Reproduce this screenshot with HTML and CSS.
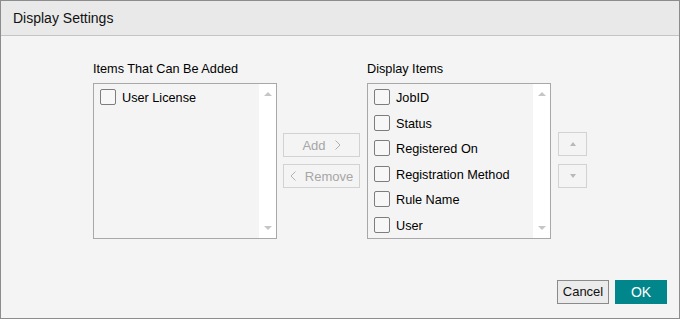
FILE: index.html
```html
<!DOCTYPE html>
<html>
<head>
<meta charset="utf-8">
<link rel="stylesheet" href="styles.css">
</head>
<body>
<div class="dialog">
  <div class="dlg-header">Display Settings</div>
  <div class="dlg-body">
    <div class="transfer">
      <div class="lbl">Items That Can Be Added</div>
      <div></div>
      <div class="lbl">Display Items</div>
      <div></div>

      <div class="listbox">
        <div class="items">
          <div class="item"><span class="cb"></span><span>User License</span></div>
        </div>
        <div class="sbar"><span class="tri up"></span><span class="tri down"></span></div>
      </div>

      <div class="move-btns">
        <div class="btn-dis">Add <svg class="chev" width="6" height="10" viewBox="0 0 6 10"><path d="M0.5 0.5 L5 5 L0.5 9.5" fill="none" stroke="#b0b0b0" stroke-width="1"/></svg></div>
        <div class="btn-dis"><svg class="chev" width="6" height="10" viewBox="0 0 6 10"><path d="M5.5 0.5 L1 5 L5.5 9.5" fill="none" stroke="#b0b0b0" stroke-width="1"/></svg> Remove</div>
      </div>

      <div class="listbox">
        <div class="items">
          <div class="item"><span class="cb"></span><span>JobID</span></div>
          <div class="item"><span class="cb"></span><span>Status</span></div>
          <div class="item"><span class="cb"></span><span>Registered On</span></div>
          <div class="item"><span class="cb"></span><span>Registration Method</span></div>
          <div class="item"><span class="cb"></span><span>Rule Name</span></div>
          <div class="item"><span class="cb"></span><span>User</span></div>
        </div>
        <div class="sbar"><span class="tri up"></span><span class="tri down"></span></div>
      </div>

      <div class="order-btns">
        <div class="btn-sq"><span class="tri up"></span></div>
        <div class="btn-sq"><span class="tri down"></span></div>
      </div>
    </div>
  </div>
  <div class="dlg-footer">
    <div class="btn-cancel">Cancel</div>
    <div class="btn-ok">OK</div>
  </div>
</div>
</body>
</html>
```
FILE: styles.css
```css
html, body {
  margin: 0;
  padding: 0;
  background: #f4f4f4;
}
.dialog {
  width: 680px;
  height: 319px;
  box-sizing: border-box;
  border: 1px solid #8c8c8c;
  background: #f4f4f4;
  display: flex;
  flex-direction: column;
  font-family: "Liberation Sans", Arial, sans-serif;
  color: #000;
}
.dlg-header {
  height: 35px;
  box-sizing: border-box;
  border-bottom: 1px solid #c4c4c4;
  background: #e9e9e9;
  font-size: 14px;
  line-height: 16px;
  padding: 9px 0 0 12px;
  color: #111;
}
.dlg-body {
  flex: 1;
  padding: 26px 0 0 92px;
}
.transfer {
  display: grid;
  grid-template-columns: 184px 78px 184px 30px;
  grid-template-rows: auto 156px;
  column-gap: 6px;
}
.lbl {
  font-size: 12.7px;
  line-height: 14px;
  margin-bottom: 7px;
}
.listbox {
  border: 1px solid #a8a8a8;
  box-sizing: border-box;
  height: 156px;
  display: flex;
  background: #f4f4f4;
}
.items {
  flex: 1;
  padding: 5px 0 0 6px;
}
.item {
  height: 25.6px;
  display: flex;
  align-items: flex-start;
  font-size: 12.7px;
  line-height: 18px;
}
.cb {
  width: 16px;
  height: 16px;
  box-sizing: border-box;
  border: 1px solid #7d7d7d;
  border-radius: 2px;
  background: #f7f7f7;
  margin-right: 6px;
  flex: none;
}
.sbar {
  width: 17px;
  background: #fff;
  display: flex;
  flex-direction: column;
  justify-content: space-between;
  align-items: center;
  padding: 8px 0 8px;
}
.tri {
  width: 0;
  height: 0;
  border-left: 4px solid transparent;
  border-right: 4px solid transparent;
}
.tri.up {
  border-bottom: 4px solid #c6c6c6;
}
.tri.down {
  border-top: 4px solid #c6c6c6;
}
.move-btns, .order-btns {
  display: flex;
  flex-direction: column;
  justify-content: center;
  gap: 7px;
}
.move-btns {
  padding-bottom: 1px;
  width: 77px;
}
.btn-dis {
  height: 24px;
  box-sizing: border-box;
  border: 1px solid #d2d2d2;
  display: flex;
  align-items: center;
  justify-content: center;
  gap: 9px;
  font-size: 13px;
  color: #a6a6a6;
}
.order-btns {
  margin-left: 1px;
  padding-bottom: 2px;
  gap: 8px;
}
.btn-sq {
  height: 24px;
  box-sizing: border-box;
  border: 1px solid #d2d2d2;
  display: flex;
  align-items: center;
  justify-content: center;
}
.btn-sq .tri {
  border-left-width: 3px;
  border-right-width: 3px;
}
.btn-sq .tri.up { border-bottom: 4px solid #b8b8b8; }
.btn-sq .tri.down { border-top: 4px solid #b8b8b8; }
.dlg-footer {
  display: flex;
  justify-content: flex-end;
  gap: 6px;
  padding: 0 12px 14px 0;
}
.btn-cancel {
  width: 52px;
  height: 24px;
  box-sizing: border-box;
  border: 1px solid #8a8a8a;
  background: #ebebeb;
  font-size: 13px;
  line-height: 22px;
  text-align: center;
  color: #111;
}
.btn-ok {
  width: 52px;
  height: 24px;
  background: #00868b;
  color: #fff;
  font-size: 14px;
  line-height: 24px;
  text-align: center;
}
```
